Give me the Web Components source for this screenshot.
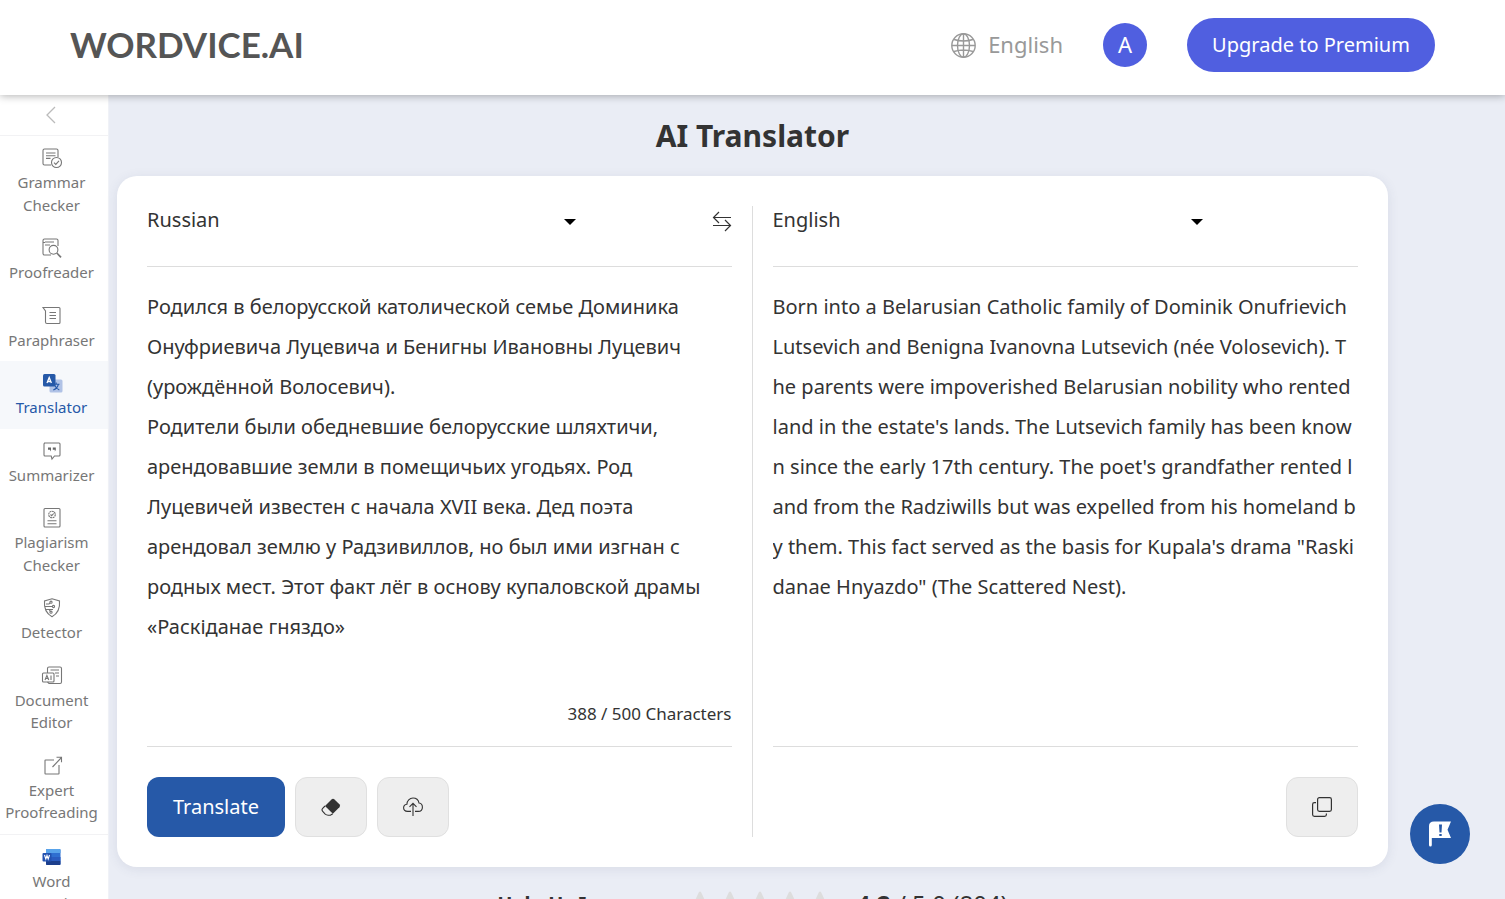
<!DOCTYPE html>
<html lang="en">
<head>
<meta charset="utf-8">
<title>AI Translator</title>
<style>
  html, body { height: 100%; }
  body { margin: 0; overflow: hidden; font-family: "Noto Sans", sans-serif; color: #333; background: #eaedf5; }
</style>
</head>
<body>
<wv-app></wv-app>

<template id="t-app">
  <style>
    :host { display: flex; flex-direction: column; height: 100vh; overflow: hidden; }
    .body { display: flex; flex: 1; min-height: 0; }
    main { flex: 1; min-width: 0; margin: 0 117px 0 8px; }
    h1 { margin: 20px 0 20px; font-size: 30px; line-height: 41px; font-weight: 700; text-align: center; }
    wv-feedback { position: fixed; right: 35px; bottom: 35px; }
  </style>
  <wv-header></wv-header>
  <div class="body">
    <wv-sidebar></wv-sidebar>
    <main>
      <h1>AI Translator</h1>
      <wv-translator></wv-translator>
      <wv-rating score="4.2" total="5.0" votes="804">Help Us Improve</wv-rating>
    </main>
  </div>
  <wv-feedback></wv-feedback>
</template>

<template id="t-header">
  <style>
    :host { display: block; position: relative; z-index: 2; background: #fff; box-shadow: 0 1px 8px rgba(0,0,0,.3); }
    header { display: flex; align-items: center; height: 95px; padding: 0 70px 5px; box-sizing: border-box; }
    .logo { font: 700 35px/40px Lato, sans-serif; color: #555; text-decoration: none; margin-right: auto; padding-bottom: 3px; }
    button { font: inherit; border: 0; cursor: pointer; padding: 0 0 2px; box-sizing: border-box; }
    .lang { display: flex; align-items: center; gap: 12px; background: none; color: #999; font-size: 22px; line-height: 30px; }
    .lang svg { margin-top: 2px; }
    .avatar { width: 44px; height: 44px; border-radius: 50%; background: #505fe0; color: #fff; font-size: 22px; line-height: 42px; margin: 0 40px; }
    .up { height: 54px; width: 248px; border-radius: 27px; background: #505fe0; color: #fff; font-size: 20px; }
    .row { display: flex; align-items: center; }
  </style>
  <header>
    <a class="logo" href="#">WORDVICE.AI</a>
    <div class="row">
      <button class="lang"><svg width="25" height="25" viewBox="0 0 25 25" fill="none" stroke="#999" stroke-width="1.4" aria-hidden="true"><circle cx="12.500" cy="12.500" r="11.700"/><ellipse cx="12.500" cy="12.500" rx="6" ry="11.700"/><path d="M12.500 1v23M1 12.500h23M3 6.500q9.500 3 19 0M3 18.500q9.500-3 19 0"/></svg>English</button>
      <button class="avatar">A</button>
      <button class="up">Upgrade to Premium</button>
    </div>
  </header>
</template>

<template id="t-sidebar">
  <style>
    :host { display: block; flex: none; width: 108px; background: #fff; border-right: 1px solid #f0f2f7; overflow: hidden; }
    .back { display: flex; justify-content: center; align-items: center; width: 100%; height: 41px; padding: 0 6px 0 0; border: 0; border-bottom: 1px solid #f2f2f4; background: none; }
    hr { margin: 0; border: 0; border-top: 1px solid #f2f2f4; }
  </style>
  <button class="back" aria-label="Collapse menu"><svg width="12" height="18" viewBox="0 0 12 18" fill="none" stroke="#bbb" stroke-width="1.3"><path d="M10 1 2 9l8 8"/></svg></button>
  <nav>
    <wv-nav-item icon="grammar">Grammar Checker</wv-nav-item>
    <wv-nav-item icon="proof">Proofreader</wv-nav-item>
    <wv-nav-item icon="para">Paraphraser</wv-nav-item>
    <wv-nav-item icon="trans" active>Translator</wv-nav-item>
    <wv-nav-item icon="summ">Summarizer</wv-nav-item>
    <wv-nav-item icon="plag">Plagiarism Checker</wv-nav-item>
    <wv-nav-item icon="detect">Detector</wv-nav-item>
    <wv-nav-item icon="doc">Document Editor</wv-nav-item>
    <wv-nav-item icon="expert">Expert Proofreading</wv-nav-item>
    <hr>
    <wv-nav-item icon="word">Word Extension</wv-nav-item>
  </nav>
</template>

<template id="t-nav-item">
  <style>
    :host { display: block; }
    a { display: block; padding: 8px 5px 10px 0; color: #777; text-decoration: none; text-align: center; font-size: 15px; line-height: 1.5; }
    :host([active]) a { background: #f6f8fb; color: #2659a8; }
    svg { display: block; width: 22px; height: 22px; margin: 0 auto; padding: 3px 0 2px; fill: none; stroke: #777; stroke-width: 1.1; }
    .label { display: block; }
  </style>
  <a href="#"><svg viewBox="0 0 22 22" aria-hidden="true"></svg><span class="label"><slot></slot></span></a>
</template>

<template id="t-translator">
  <style>
    :host { display: grid; grid-template-columns: 1fr 1fr; background: #fff; border-radius: 20px; padding: 30px; box-shadow: 0 2px 12px rgba(60,70,110,.1); }
    wv-panel { padding-left: 20px; }
    wv-panel:first-of-type { padding: 0 20px 0 0; border-right: 1px solid #ddd; }
    button { height: 60px; width: 72px; padding: 0; display: flex; align-items: center; justify-content: center; border: 1px solid #e0e0e0; border-radius: 12px; background: #eee; cursor: pointer; }
    .go { width: 138px; border: 0; background: #2659a8; color: #fff; font: 20px/28px "Noto Sans", sans-serif; }
    .swap { width: 20px; height: 30px; border: 0; background: none; }
    .copy { margin-left: auto; }
    textarea, output { display: block; box-sizing: border-box; width: 100%; height: 400px; margin: 0; padding: 0; border: 0; outline: 0; resize: none; overflow: hidden; background: none; color: #333; font: 20px/40px "Noto Sans", sans-serif; }
    output { word-break: break-all; }
    .count { font-size: 17px; line-height: 24px; text-align: right; }
  </style>
  <wv-panel language="Russian" label="Source language">
    <button slot="tool" class="swap" aria-label="Swap languages"><svg width="20" height="22" viewBox="0 0 20 22" fill="none" stroke="#333" stroke-width="1.2"><path d="M19 7.500H2M7 2 1.500 7.500 7 13M1 15.500h17M13 10l5.500 5.500L13 21"/></svg></button>
    <textarea aria-label="Source text" spellcheck="false">Родился в белорусской католической семье Доминика Онуфриевича Луцевича и Бенигны Ивановны Луцевич (урождённой Волосевич).
Родители были обедневшие белорусские шляхтичи, арендовавшие земли в помещичьих угодьях. Род Луцевичей известен с начала XVII века. Дед поэта арендовал землю у Радзивиллов, но был ими изгнан с родных мест. Этот факт лёг в основу купаловской драмы «Раскіданае гняздо»</textarea>
    <div slot="count" class="count">388 / 500 Characters</div>
    <button slot="actions" class="go">Translate</button>
    <button slot="actions" aria-label="Clear"><svg width="20" height="20" viewBox="0 0 20 20"><path d="M10.500 2.400q1.500-1.400 3 0l4.900 4.900q1.400 1.500 0 3l-6.500 6.500-7.900-7.900z" fill="#333"/><path d="m4 9-2.300 2.300q-1.400 1.500 0 3L4.200 17.200q1.200 1 3 1h2.200l2.400-1.500" fill="none" stroke="#333" stroke-width="1.100"/></svg></button>
    <button slot="actions" aria-label="Upload"><svg width="20" height="20" viewBox="0 0 20 20" fill="none" stroke="#333" stroke-width="1.100"><path d="M8 14.400H4.600C2.300 14.400.6 13 .6 10.800.6 8.900 2 7.500 3.900 7.200 4 3.700 6.600 1 10 1c3.100 0 5.400 2 6 5 2 .2 3.400 1.900 3.400 4.200 0 2.500-1.800 4.200-4.200 4.200H12M10 19V6.500M6.500 9.800 10 6.300l3.500 3.500"/></svg></button>
  </wv-panel>
  <wv-panel language="English" label="Target language">
    <output>Born into a Belarusian Catholic family of Dominik Onufrievich Lutsevich and Benigna Ivanovna Lutsevich (née Volosevich). The parents were impoverished Belarusian nobility who rented land in the estate's lands. The Lutsevich family has been known since the early 17th century. The poet's grandfather rented land from the Radziwills but was expelled from his homeland by them. This fact served as the basis for Kupala's drama "Raskidanae Hnyazdo" (The Scattered Nest).</output>
    <button slot="actions" class="copy" aria-label="Copy"><svg width="20" height="20" viewBox="0 0 20 20" fill="none" stroke="#333" stroke-width="1.200"><rect x="5.600" y=".6" width="13.800" height="13.800" rx="1.800"/><path d="M4 5.600H2.400Q.6 5.600.6 7.400v10.200q0 1.800 1.800 1.800h10.200q1.800 0 1.800-1.800V16.500"/></svg></button>
  </wv-panel>
</template>

<template id="t-panel">
  <style>
    :host { display: flex; flex-direction: column; min-width: 0; }
    .top { display: flex; align-items: flex-start; justify-content: space-between; height: 60px; border-bottom: 1px solid #ddd; }
    .pick { display: grid; width: 75%; align-items: center; }
    select { grid-area: 1 / 1; appearance: none; border: 0; padding: 0; background: none; color: #333; font: 20px/28px "Noto Sans", sans-serif; height: 28px; }
    .pick svg { grid-area: 1 / 1; justify-self: end; margin: 4px 9px 0 0; pointer-events: none; }
    .text { padding-top: 20px; }
    .count { height: 24px; margin: 15px 0 20px; }
    .actions { display: flex; gap: 10px; padding-top: 30px; border-top: 1px solid #ddd; }
  </style>
  <div class="top">
    <div class="pick"><select></select><svg width="12" height="6" viewBox="0 0 12 6" aria-hidden="true"><path d="M0 0h12L6 6z"/></svg></div>
    <slot name="tool"></slot>
  </div>
  <div class="text"><slot></slot></div>
  <div class="count"><slot name="count"></slot></div>
  <div class="actions"><slot name="actions"></slot></div>
</template>

<template id="t-rating">
  <style>
    :host { display: flex; justify-content: center; align-items: center; gap: 24px; padding-top: 19px; font-size: 20px; line-height: 36px; white-space: nowrap; }
    b { font-weight: 700; }
    .stars { display: flex; gap: 4px; fill: #ddd; }
    .score { font-size: 24px; }
  </style>
  <b><slot></slot></b>
  <span class="stars"></span>
  <span class="score"><b></b><span></span></span>
</template>

<template id="t-feedback">
  <style>
    :host { display: block; }
    button { display: flex; align-items: center; justify-content: center; width: 60px; height: 60px; padding: 0; border: 0; border-radius: 50%; background: #2659a8; }
  </style>
  <button aria-label="Send feedback"><svg width="22" height="26" viewBox="0 0 22 26"><path d="M0 5Q0 .5 5 .5h17l-3.500 8.200L22 17H2.800v7q0 1.500-1.400 1.500T0 24z" fill="#fff"/><path d="M10 3.500h3l-.5 8h-2zM10.300 13h2.400v2h-2.400z" fill="#2659a8"/></svg></button>
</template>

<script>
const ICONS = {
  grammar: '<path d="M17 10V3.500Q17 2 15.500 2h-12Q2 2 2 3.500v13Q2 18 3.500 18H10M5 6h9.500M5 8.700h9.500M5 11.400h4.500"/><circle cx="15.500" cy="15.500" r="5"/><path d="m13 15.600 1.800 1.800 3.200-3.600"/>',
  proof: '<path d="M17 9V3.500Q17 2 15.500 2h-12Q2 2 2 3.500v13Q2 18 3.500 18H10M4 5h9M4 8h5M2 5.500h2"/><circle cx="12.500" cy="12.800" r="4.400"/><path d="m15.800 16 4.200 4.300" stroke-width="1.700"/>',
  para: '<path d="M2 2.500h16q1 0 1 1v14q0 1-1 1H6q-1.500 0-1.500-1.500V6zM8.500 7.500H15M8.500 10.500H15M8.500 13.500H15"/>',
  trans: '<g stroke="none"><rect x="8.500" y="7.500" width="13" height="13" rx="1.500" fill="#b0c2e6"/><rect x="2" y="2" width="12.500" height="12.500" rx="1.500" fill="#2659a8"/></g><path d="m6 11 2.200-5.500L10.400 11M7 9.500h2.500" stroke="#fff" stroke-width="1.300"/><path d="M12 12.300h6.500M15.200 10.500v1.800M17.300 12.500q-1 4-5 5.500M13.500 13q1.500 3.500 4.800 5" stroke="#2659a8"/>',
  summ: '<path d="M3 3h15q1 0 1 1v11q0 1-1 1h-4.500L11 19l-.8-3H4q-1 0-1-1V4q0-1 1-1z"/><path d="M7 7.500h3v2.500l-1 1.500V9.800H7zm4.800 0h3v2.500l-1 1.500V9.800h-2z" fill="#666" stroke="none"/>',
  plag: '<rect x="3" y="1.500" width="16" height="18.500" rx="1"/><circle cx="11" cy="7.500" r="3.300" stroke-dasharray="2 .5"/><path d="m9.500 7.500 1.200 1.200 2-2.200M6.500 13.800h9M6.500 16.800h9"/>',
  detect: '<path d="M11 1.800 18.500 4q1 11-7.500 15.700Q2.500 15 3.500 4zM3.500 9.500h7.500M5 12.500h3l1.500 2M5 7h3l1-1.200M4 12.500h8"/><circle cx="10" cy="5.200" r="1.100"/><circle cx="12.500" cy="9.500" r="1.100"/><circle cx="10" cy="15.200" r="1.100"/>',
  doc: '<path d="M6.500 8V3.500Q6.500 2 8 2h11q1.500 0 1.500 1.500V17q0 1.500-1.500 1.500H8L6.500 17M9.500 5H18M14 8h4M15 11h3"/><rect x="1.500" y="8" width="11.500" height="9" rx="1"/><path d="m4 15 1.900-4.500L7.800 15M4.800 13.500H7M10 10.500V15"/>',
  expert: '<path d="M13 5H4.500Q4 5 4 5.500v13q0 .5.500.5h13q.5 0 .5-.5V10M11.500 12 20.500 2.500M15.500 2.200h5v5"/>',
  word: '<g stroke="none"><rect x="5" y="3" width="14.500" height="16" rx="1" fill="#2f6fd0"/><path d="M5 4q0-1 1-1h12.500q1 0 1 1v3H5z" fill="#58a3ea"/><path d="M5 11h14.500v4H5z" fill="#2a5cc0"/><path d="M5 15h14.500v3q0 1-1 1H6q-1 0-1-1z" fill="#1c3f8c"/><rect x="1.500" y="7" width="9" height="8.500" rx="1" fill="#2352b0"/></g><path d="m3.500 9 1.300 4L6 9.500 7.200 13 8.500 9" stroke="#fff"/>'
};
class Base extends HTMLElement {
  constructor() {
    super();
    const id = 't-' + this.localName.slice(3);
    this.attachShadow({ mode: 'open' }).append(document.getElementById(id).content.cloneNode(true));
  }
}
const define = (name, cls = class extends Base {}) => customElements.define('wv-' + name, cls);
define('nav-item', class extends Base {
  connectedCallback() {
    this.shadowRoot.querySelector('svg').innerHTML = ICONS[this.getAttribute('icon')];
    if (this.hasAttribute('active')) this.shadowRoot.querySelector('a').setAttribute('aria-current', 'page');
  }
});
define('panel', class extends Base {
  connectedCallback() {
    const select = this.shadowRoot.querySelector('select');
    select.setAttribute('aria-label', this.getAttribute('label'));
    select.replaceChildren(new Option(this.getAttribute('language')));
  }
});
define('rating', class extends Base {
  connectedCallback() {
    const root = this.shadowRoot;
    root.querySelector('.stars').innerHTML = '<svg width="26" height="26" viewBox="0 0 26 26"><path d="M11.600 1.800q1.400-2.600 2.800 0l3 6.500 7 1q2 .6.800 2.200l-5.200 5 1.200 7q0 2-2 1.300L13 21.500l-6.200 3.300q-2 .7-2-1.300l1.200-7-5.200-5Q-.4 9.900 1.600 9.300l7-1z"/></svg>'.repeat(5);
    root.querySelector('.score b').textContent = this.getAttribute('score');
    root.querySelector('.score span').textContent = ` / ${this.getAttribute('total')} (${this.getAttribute('votes')})`;
  }
});
['header', 'sidebar', 'translator', 'feedback', 'app'].forEach(n => define(n));
</script>
</body>
</html>
